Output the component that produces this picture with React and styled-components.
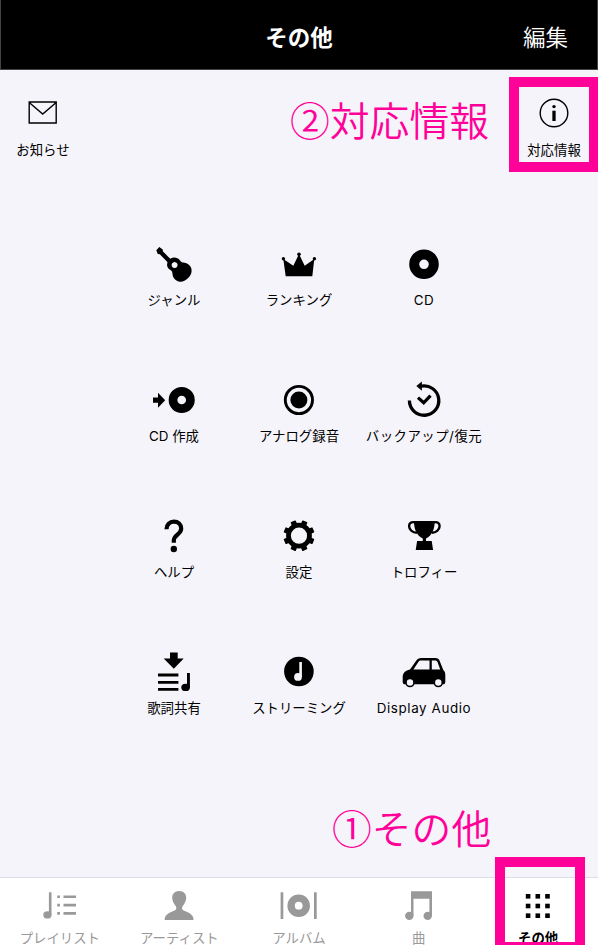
import styled, { createGlobalStyle } from 'styled-components';

const GuitarIcon = () => (
    <>
        <path d="M12.300 8.300l3-3.200 3.400 2.300.3 2.200L29 19.400l-3.200 3.200-10-10.300-2-.3z" />
        <path
            fillRule="evenodd"
            d="M24 19.300c2.300-4.600 8.800-5.200 12-.9.900 1.300 1.800 2 3.700 2.200 5 .7 8.300 4.300 7.900 8.600-.3 3.300-1.700 5-4 7.300-2.400 2.400-5.400 3.800-8.900 3-3.800-.9-6-4.100-6.300-8.200-.1-1.800-.7-2.600-2.300-3.500-3.300-2-3.700-5.300-2.100-8.500zM30.600 19.900a3 3 0 1 0 .01 0z"
        />
    </>
);

const CrownIcon = () => (
    <>
        <path d="M14.300 17l10 6.700L30 12l5.700 11.700 9.600-6.700-2 17.300H16.700z" />
        <circle cx="14.400" cy="16.700" r="1.700" />
        <circle cx="30" cy="12.200" r="1.800" />
        <circle cx="45.400" cy="16.700" r="1.700" />
    </>
);

const CdIcon = () => (
    <circle cx="30" cy="22.300" r="9.800" fill="none" stroke="currentColor" strokeWidth="10" />
);

const CreateCdIcon = () => (
    <>
        <path d="M9 19.500h5v-4.800l7.200 7.500-7.200 7.500v-5H9z" />
        <circle cx="37.700" cy="22" r="8.700" fill="none" stroke="currentColor" strokeWidth="8.700" />
    </>
);

const RecordIcon = () => (
    <>
        <circle cx="29.900" cy="22" r="13.600" fill="none" stroke="currentColor" strokeWidth="2.900" />
        <circle cx="29.900" cy="22" r="8.500" />
    </>
);

const RestoreIcon = () => (
    <>
        <g fill="none" stroke="currentColor" strokeWidth="3.300">
            <path d="M15.400 22.600A14.700 14.700 0 1 0 27 8.200" />
            <path d="M24 19.600l5.700 5.200 6.800-7.200" />
        </g>
        <path d="M22.300 8.100l5.600-4.500v9.200z" />
    </>
);

const HelpIcon = () => (
    <>
        <path
            d="M22.500 15.200c0-4.700 3.200-7.600 7.400-7.600s7.300 2.800 7.300 6.900c0 6-7.400 6.200-7.400 12.100v2.200"
            fill="none"
            stroke="currentColor"
            strokeWidth="4.200"
        />
        <circle cx="29.800" cy="35" r="3.200" />
    </>
);

const GEAR_ANGLES = [22.5, 67.5, 112.5, 157.5, 202.5, 247.5, 292.5, 337.5];

const GearIcon = () => (
    <>
        <circle cx="30" cy="21.700" r="10.500" fill="none" stroke="currentColor" strokeWidth="4.800" />
        {GEAR_ANGLES.map((angle) => (
            <rect key={angle} x="27.200" y="6.100" width="5.600" height="5" rx="0.800" transform={`rotate(${angle} 30 21.700)`} />
        ))}
    </>
);

const TrophyIcon = () => (
    <>
        <path d="M20 7h20.700c0 8.800-2.700 14.200-8.700 17.600V27h5.700l1.400 9H21.700l1.400-9h5.700v-2.400C22.700 21.200 20 15.800 20 7z" />
        <path
            d="M21 8.400c-3.600-.8-6 .6-5.900 3.900.1 3.800 3.600 6.400 7.800 6.400M39.700 8.400c3.600-.8 6 .6 5.900 3.900-.1 3.800-3.600 6.400-7.800 6.400"
            fill="none"
            stroke="currentColor"
            strokeWidth="2.400"
        />
    </>
);

const LyricsIcon = () => (
    <>
        <path d="M26 2.500h7.700v6h6L29.800 18.700 19.700 8.500H26z" />
        <path d="M14 23.600h20.400v2.900H14zM14 30.900h20.400v2.900H14zM14 37.900h20.400v2.900H14zM43 23h2.900v14.500H43z" />
        <ellipse cx="41.600" cy="37.400" rx="4.300" ry="3.700" />
    </>
);

const StreamingIcon = () => (
    <>
        <circle cx="29.900" cy="21.500" r="14.800" />
        <path d="M30.300 12h2.600v15h-2.600z" fill="#f5f4fa" />
        <circle cx="29" cy="26.900" r="3.900" fill="#f5f4fa" />
    </>
);

const CarIcon = () => (
    <>
        <path
            fillRule="evenodd"
            d="M27 8h14.300c2.500 0 3.700 1 4.500 3.300l3.500 8.700c1.400 1.300 2 2.500 2 4.700v7c0 1.700-.8 2.600-2.300 2.600H11c-1.500 0-2.300-.9-2.300-2.600v-4.500c0-3.500 1.800-6.500 7.300-7.700l6-8.500C23.600 8.800 24.900 8 27 8zM27 10.400c-1.300 0-1.800.4-2.500 1.400l-5.100 7.700h16.100v-9.100zM37.800 10.400v9.100h8.400l-2.600-7.200c-.5-1.400-1.200-1.900-2.600-1.900z"
        />
        <circle cx="16" cy="32.500" r="4" fill="#f5f4fa" stroke="currentColor" strokeWidth="1.600" />
        <circle cx="44.300" cy="32.500" r="4" fill="#f5f4fa" stroke="currentColor" strokeWidth="1.600" />
    </>
);

const PlaylistIcon = () => (
    <>
        <path d="M18.900 4.300h2.600V27h-2.600z" />
        <ellipse cx="17.400" cy="26.900" rx="4.100" ry="3.600" />
        <path d="M27.200 7.400h2.700v2.700h-2.700zM27.200 15.700h2.700v2.700h-2.700zM27.200 24h2.700v2.700h-2.700z" />
        <path d="M33.500 7.400H46v2.700H33.500zM33.500 15.700H46v2.700H33.500zM33.500 24H46v2.700H33.500z" />
    </>
);

const ArtistIcon = () => (
    <path d="M30.200 3c4.300 0 7 2.800 7 6.700 0 3.700-2 6.200-3.500 8.300-1 1.600-.8 3.700 1 4.600 4.500 2 9.900 3.600 9.900 9.400h-29c0-5.800 5.600-7.400 10-9.400 1.900-.9 2.100-3 1.100-4.600-1.500-2.100-3.500-4.600-3.500-8.300 0-3.900 2.700-6.700 7-6.700z" />
);

const AlbumIcon = () => (
    <>
        <path d="M11.600 4.300h2.700V31h-2.700zM45 4.300h2.700V31H45z" />
        <circle cx="29.700" cy="17.700" r="7.600" fill="none" stroke="currentColor" strokeWidth="7.400" />
    </>
);

const SongIcon = () => (
    <>
        <path d="M22 3.200h21V28h-2.600V10.800H24.500V28H22z" />
        <circle cx="20.300" cy="27.900" r="4.200" />
        <circle cx="38.700" cy="27.900" r="4.200" />
    </>
);

const OtherIcon = () => (
    <>
        {[0, 1, 2].map((row) =>
            [0, 1, 2].map((col) => (
                <rect key={`${row}${col}`} x={17.8 + col * 9.7} y={6 + row * 9.7} width="4.600" height="4.600" />
            ))
        )}
    </>
);

const MENUS = [
    { label: 'ジャンル', icon: GuitarIcon },
    { label: 'ランキング', icon: CrownIcon },
    { label: 'CD', icon: CdIcon, spacing: 0.5 },
    { label: 'CD 作成', icon: CreateCdIcon },
    { label: 'アナログ録音', icon: RecordIcon },
    { label: 'バックアップ/復元', icon: RestoreIcon, spacing: 0.5 },
    { label: 'ヘルプ', icon: HelpIcon },
    { label: '設定', icon: GearIcon },
    { label: 'トロフィー', icon: TrophyIcon },
    { label: '歌詞共有', icon: LyricsIcon },
    { label: 'ストリーミング', icon: StreamingIcon },
    { label: 'Display Audio', icon: CarIcon, spacing: 0.6 },
];

const TABS = [
    { label: 'プレイリスト', icon: PlaylistIcon },
    { label: 'アーティスト', icon: ArtistIcon },
    { label: 'アルバム', icon: AlbumIcon },
    { label: '曲', icon: SongIcon },
    { label: 'その他', icon: OtherIcon, active: true },
];

const App = () => {
    return (
        <Page>
            <GlobalStyle />
            <Header>
                <HeaderTitle>その他</HeaderTitle>
                <EditButton>編集</EditButton>
            </Header>

            <Main>
                <Shortcuts>
                    <Shortcut>
                        <ShortcutIcon viewBox="0 0 32 32">
                            <path d="M2.200 5h27v21h-27zM2.200 5.500l13.500 11.500L29.200 5.500" />
                        </ShortcutIcon>
                        <Label>お知らせ</Label>
                    </Shortcut>
                    <Shortcut>
                        <ShortcutIcon viewBox="0 0 32 32">
                            <circle cx="16" cy="16" r="13.800" />
                            <path d="M16 13.700v10.300" strokeWidth="3.300" />
                            <circle cx="16" cy="9.600" r="1.700" fill="currentColor" stroke="none" />
                        </ShortcutIcon>
                        <Label>対応情報</Label>
                    </Shortcut>
                </Shortcuts>

                <MenuGrid>
                    {MENUS.map(({ label, icon: Icon, spacing }) => (
                        <MenuItem key={label}>
                            <MenuIcon viewBox="0 0 60 46">
                                <Icon />
                            </MenuIcon>
                            <Label $spacing={spacing}>{label}</Label>
                        </MenuItem>
                    ))}
                </MenuGrid>
            </Main>

            <TabBar>
                {TABS.map(({ label, icon: Icon, active }) => (
                    <Tab key={label} $active={active}>
                        <TabIcon viewBox="0 0 60 36">
                            <Icon />
                        </TabIcon>
                        <Label>{label}</Label>
                    </Tab>
                ))}
            </TabBar>

            <StepText $top={90} $left={290}>②対応情報</StepText>
            <Highlight $top={77} $left={509} />
            <StepText $top={798} $left={332}>①その他</StepText>
            <Highlight $top={857} $left={495} />
        </Page>
    );
};

const GlobalStyle = createGlobalStyle`
    * {
        box-sizing: border-box;
    }

    body {
        margin: 0;
        overflow: hidden;
    }
`;

const Page = styled.div`
    position: relative;
    display: flex;
    flex-direction: column;
    width: 598px;
    height: 945px;
    overflow: hidden;
    background-color: #f5f4fa;
    color: #000000;
    font-family: "Inter", "Noto Sans CJK JP", sans-serif;
`;

const Header = styled.header`
    display: grid;
    grid-template-columns: 1fr auto 1fr;
    align-items: center;
    flex-shrink: 0;
    height: 70px;
    padding: 7px 29px 0;
    border: solid #444444;
    border-width: 0 1px 1px;
    background-color: #000000;
    color: #ffffff;
`;

const HeaderTitle = styled.h1`
    grid-column: 2;
    margin: 0;
    font-size: 22.5px;
    font-weight: 700;
    line-height: 32px;
`;

const EditButton = styled.button`
    justify-self: end;
    padding: 0;
    border: none;
    background: none;
    color: #ffffff;
    font-family: inherit;
    font-size: 22.5px;
    font-weight: 350;
    line-height: 32px;
    cursor: pointer;
`;

const Main = styled.main`
    display: flex;
    flex-direction: column;
    flex: 1;
    min-height: 0;
`;

const Shortcuts = styled.div`
    display: flex;
    justify-content: space-between;
    height: 172px;
    padding: 27px 3px 0 2px;
`;

const Shortcut = styled.div`
    display: flex;
    flex-direction: column;
    align-items: center;
    gap: 11px;
    width: 82px;
`;

const ShortcutIcon = styled.svg`
    width: 32px;
    height: 32px;
    fill: none;
    stroke: currentColor;
    stroke-width: 1.4;
`;

const Label = styled.span`
    font-size: 13.4px;
    line-height: 20px;
    letter-spacing: ${({ $spacing }) => $spacing || 0}px;
    white-space: nowrap;
`;

const MenuGrid = styled.div`
    display: grid;
    grid-template-columns: repeat(3, 125px);
    grid-auto-rows: 136px;
    justify-content: center;
`;

const MenuItem = styled.div`
    display: flex;
    flex-direction: column;
    align-items: center;
    gap: 2px;
`;

const MenuIcon = styled.svg`
    width: 60px;
    height: 46px;
    fill: currentColor;
`;

const TabBar = styled.nav`
    display: grid;
    grid-template-columns: repeat(5, 1fr);
    flex-shrink: 0;
    height: 68px;
    padding-top: 10px;
    border-top: 1px solid #dfdee4;
    background-color: #ffffff;
`;

const Tab = styled.div`
    display: flex;
    flex-direction: column;
    align-items: center;
    gap: 4px;
    color: ${({ $active }) => ($active ? '#000000' : '#999999')};
    font-weight: ${({ $active }) => ($active ? 700 : 400)};
`;

const TabIcon = styled.svg`
    width: 60px;
    height: 36px;
    fill: currentColor;
`;

// callouts drawn over the screen
const StepText = styled.div`
    position: absolute;
    top: ${({ $top }) => $top}px;
    left: ${({ $left }) => $left}px;
    color: #ff0099;
    font-family: "Noto Sans CJK JP", sans-serif;
    font-size: 39.8px;
    font-weight: 350;
    line-height: 58px;
    white-space: nowrap;
`;

const Highlight = styled.div`
    position: absolute;
    top: ${({ $top }) => $top}px;
    left: ${({ $left }) => $left}px;
    width: 90px;
    height: 95px;
    border: 10px solid #ff0099;
`;

export default App;
